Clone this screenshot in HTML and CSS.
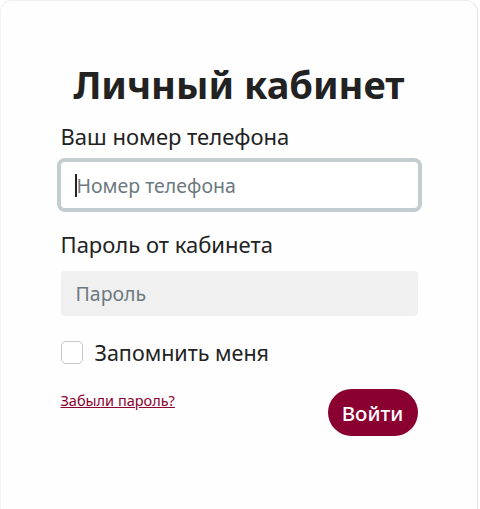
FILE: index.html
```html
<!DOCTYPE html>
<html lang="ru">
<head>
<meta charset="utf-8">
<title>Личный кабинет</title>
<link rel="stylesheet" href="styles.css">
</head>
<body>
<div class="card">
  <form class="form">
    <h1 class="title">Личный кабинет</h1>
    <label class="label" for="phone">Ваш номер телефона</label>
    <div class="input input-focus"><span class="caret"></span><span class="ph">Номер телефона</span></div>
    <label class="label label-2" for="pass">Пароль от кабинета</label>
    <div class="input input-gray"><span class="ph">Пароль</span></div>
    <div class="check-row">
      <span class="checkbox"></span>
      <span class="check-text">Запомнить меня</span>
    </div>
    <div class="actions">
      <a class="forgot" href="#">Забыли пароль?</a>
      <button class="btn" type="button">Войти</button>
    </div>
  </form>
</div>
</body>
</html>
```

FILE: styles.css
```css
html, body {
  margin: 0;
  padding: 0;
  background: #ffffff;
}
body {
  font-family: "Noto Sans", "Open Sans", sans-serif;
  color: #222222;
  width: 480px;
  height: 509px;
  overflow: hidden;
}
.card {
  box-sizing: border-box;
  width: 478px;
  height: 530px;
  border: 1px solid #e4e4e4;
  border-left-color: #f2f2f2;
  border-top-color: #eeeeee;
  border-radius: 12px;
  background: #fefefe;
  padding-top: 57px;
}
.form {
  width: 357px;
  margin: 0 auto;
  display: flex;
  flex-direction: column;
}
.title {
  margin: 0;
  font-size: 38px;
  line-height: 52px;
  font-weight: 700;
  text-align: center;
  color: #222222;
}
.label {
  font-size: 22px;
  line-height: 30px;
  margin-top: 11px;
}
.label-2 {
  margin-top: 21px;
}
.input {
  box-sizing: border-box;
  height: 46px;
  border-radius: 4px;
  display: flex;
  align-items: center;
  padding-left: 15px;
  font-size: 19.5px;
  margin-top: 11px;
}
.input-focus {
  background: #ffffff;
  box-shadow: 0 0 0 4px #c3cdd1;
}
.input-gray {
  background: #f0f0f0;
  height: 45px;
  margin-top: 12px;
}
.ph {
  color: #6d7980;
}
.caret {
  width: 2px;
  height: 23px;
  background: #222222;
  margin-left: -1px;
}
.check-row {
  display: flex;
  align-items: center;
  margin-top: 25px;
  height: 23px;
}
.checkbox {
  box-sizing: border-box;
  width: 22px;
  height: 23px;
  border: 1px solid #c8c8c8;
  border-radius: 5px;
  background: #ffffff;
}
.check-text {
  font-size: 21.5px;
  margin-left: 12px;
}
.actions {
  display: flex;
  justify-content: space-between;
  align-items: flex-start;
  margin-top: 25px;
}
.forgot {
  font-size: 14.5px;
  color: #8a0030;
  margin-top: 1px;
  text-decoration: underline;
}
.btn {
  height: 47px;
  width: 90px;
  border: none;
  border-radius: 24px;
  background: #8a0030;
  color: #ffffff;
  font-family: inherit;
  font-size: 20.5px;
  font-weight: 500;
  padding: 0;
}
```
